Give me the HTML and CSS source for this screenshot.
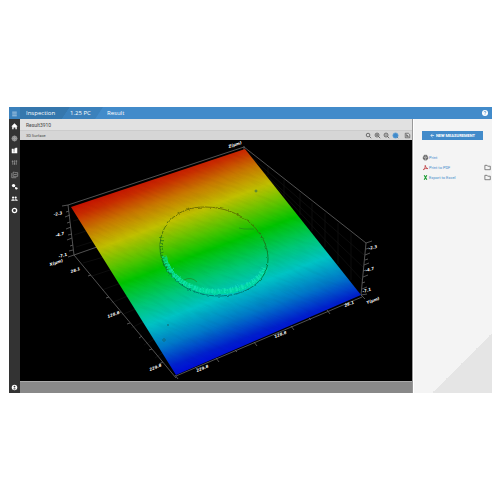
FILE: index.html
```html
<!DOCTYPE html>
<html lang="en">
	<head>
		<meta charset="UTF-8">
		<title>Inspection - Result</title>
		<link rel="stylesheet" href="styles.css">
	</head>
	<body>
		<div class="app">
			<header class="topbar">
				<button class="menu" aria-label="Menu"><svg viewBox="0 0 12 12"><path d="M3.500 4.500h5M3.500 6.500h5M3.500 8.500h5"/></svg></button>
				<nav class="crumbs">
					<a class="crumb first" href="#">Inspection</a>
					<a class="crumb second" href="#">1.25 PC</a>
					<a class="crumb" href="#">Result</a>
				</nav>
				<button class="help" aria-label="Help"><svg viewBox="0 0 12 12"><circle cx="6" cy="6" r="3" fill="#fff" stroke="none"/><path d="M5 5.300q0-1 1-1t1 .9q0 .5-1 1v.4M6 7.300v.6" stroke="#428bca" stroke-width=".7"/></svg></button>
			</header>
			<div class="body">
				<nav class="sidebar">
					<a href="#" aria-label="Home"><svg viewBox="0 0 12 12"><path class="solid" d="M6 2.500 9.500 6h-1v3H7V7H5v2H3.500V6h-1z"/></svg></a>
					<a href="#" class="dim" aria-label="Targets"><svg viewBox="0 0 12 12"><circle cx="6" cy="6" r="2.700" fill="#777"/><circle cx="6" cy="6" r="1.200"/><path d="M6 3v6M3 6h6" stroke-width=".5"/></svg></a>
					<a href="#" aria-label="Parts"><svg viewBox="0 0 12 12"><path class="solid" d="M3 4h2v1h1V3.500h1V3h2v6H3z"/><path d="M5.500 5v3" stroke="#333" stroke-width=".6"/></svg></a>
					<a href="#" class="dim" aria-label="Settings"><svg viewBox="0 0 12 12"><path d="M4 3.500v5M6 3.500v5M8 3.500v5M3 5h2M5 7.500h2M7 4.500h2" stroke-width=".6"/></svg></a>
					<a href="#" class="dim" aria-label="Library"><svg viewBox="0 0 12 12"><path d="M4.500 4.500V3.500h1.500l.5.500h3v4h-5zM3 4.500V9.500h5M5.500 6h3" stroke-width=".7"/></svg></a>
					<a href="#" aria-label="Tools"><svg viewBox="0 0 12 12"><circle class="solid" cx="5" cy="5" r="1.800"/><circle class="solid" cx="8" cy="8" r="1.300"/><path d="m5 5 3 3"/></svg></a>
					<a href="#" aria-label="Users"><svg viewBox="0 0 12 12"><path class="solid" d="M2.500 8.500V8q0-1.200 1.900-1.200T6.300 8v.5zM6.800 8.500V8q0-.7-.5-1.200 3.200-.3 3.200 1.200v.5z"/><circle class="solid" cx="4.400" cy="5" r="1.200"/><circle class="solid" cx="7.300" cy="5" r="1.200"/></svg></a>
					<a href="#" aria-label="Support"><svg viewBox="0 0 12 12"><circle cx="6" cy="6" r="2.300" stroke-width="1.500"/><path d="m3.500 3.500 1.300 1.300m2.400 2.400 1.300 1.300m0-5L7.200 4.800M4.800 7.200 3.500 8.500" stroke="#777" stroke-width=".5"/></svg></a>
					<a href="#" class="account" aria-label="Account"><svg viewBox="0 0 12 12"><circle class="solid" cx="6" cy="6" r="3"/><circle cx="6" cy="5" r="1" fill="#333" stroke="none"/><path d="M4.300 7.700q1.700-2 3.400 0-1.700 1-3.400 0" fill="#333" stroke="none"/></svg></a>
				</nav>
				<main class="result">
					<h1 class="name">Result3910</h1>
					<div class="tools">
						<h2>3D Surface</h2>
						<button aria-label="Zoom"><svg viewBox="0 0 10 10"><circle cx="4.500" cy="4.500" r="2"/><path d="m6 6 2 2"/></svg></button>
						<button aria-label="Zoom in"><svg viewBox="0 0 10 10"><circle cx="4.500" cy="4.500" r="2.200"/><path d="m6 6 2 2M3.500 4.500h2M4.500 3.500v2"/></svg></button>
						<button aria-label="Zoom out"><svg viewBox="0 0 10 10"><circle cx="4.500" cy="4.500" r="2.200"/><path d="m6 6 2 2M3.500 4.500h2"/></svg></button>
						<button aria-label="Rotate"><svg viewBox="0 0 10 10"><circle cx="5" cy="5" r="2.900" fill="#428bca" stroke="#5a9fd8"/><path d="m7 7 1 1" stroke="#357"/></svg></button>
						<button class="save" aria-label="Save view"><svg viewBox="0 0 10 10"><path d="M2.500 2.500h3.500L7.500 4v3.500h-5zM4 6V4l2 2z" stroke-width=".7"/></svg></button>
					</div>
					<svg class="plot" viewBox="20 140 392 241" role="img" aria-label="3D surface">
						<defs>
							<linearGradient id="height" gradientUnits="userSpaceOnUse" x1="72" y1="207" x2="141" y2="388">
								<stop offset="0" stop-color="#c41200"/>
								<stop offset=".05" stop-color="#c82c00"/>
								<stop offset=".14" stop-color="#c87800"/>
								<stop offset=".25" stop-color="#c0c000"/>
								<stop offset=".36" stop-color="#5ec400"/>
								<stop offset=".46" stop-color="#00c400"/>
								<stop offset=".6" stop-color="#00c878"/>
								<stop offset=".71" stop-color="#00c4c4"/>
								<stop offset=".84" stop-color="#0078c8"/>
								<stop offset=".95" stop-color="#0020cc"/>
								<stop offset="1" stop-color="#000cd8"/>
							</linearGradient>
							<linearGradient id="rim" x1="0" y1="0" x2="0" y2="1">
								<stop offset="0" stop-color="#605c00"/>
								<stop offset=".6" stop-color="#087020"/>
								<stop offset="1" stop-color="#006868"/>
							</linearGradient>
							<filter id="grain" x="0" y="0" width="1" height="1">
								<feTurbulence type="fractalNoise" baseFrequency=".06 .4" numOctaves="2"/>
								<feColorMatrix values="0 0 0 0 0  0 0 0 0 0  0 0 0 0 0  1 0 0 0 -.4"/>
							</filter>
							<filter id="rough" x="-.1" y="-.1" width="1.200" height="1.200">
								<feTurbulence type="fractalNoise" baseFrequency=".3" numOctaves="2" result="noise"/>
								<feDisplacementMap in="SourceGraphic" in2="noise" scale="3" xChannelSelector="R" yChannelSelector="G"/>
							</filter>
							<clipPath id="sheet"><path d="M72 207 245 149 361 295 176 375Z"/></clipPath>
						</defs>
						<rect x="20" y="140" width="392" height="241"/>
						<g class="grid">
							<path d="M73 221 80 219M74 235 89 230M76 247 98 240M83 263 104 257M92 276 113 269M102 290 121 283M111 303 130 295M121 315 138 308M131 328 147 320M144 345 158 337M155 358 167 350"/>
							<path d="M252 158 364 255M258 167 363 267M270 180 362 280M268 166V175M284 180V197M300 193V215M312 203V231M325 213V247M338 223V264M351 233V280"/>
						</g>
						<g class="axis">
							<path d="M68 205 244 147 366 243 361 295M68 205 74 255 97 247M74 255 176 378M176 376 362 297"/>
							<path d="M62 206l6-1M66 212l3-1M65 217l5-2M67 223l3-1M66 229l5-2M68 235l4-1M67 240l5-2M70 246l3-1M69 251l4-1M68 257l6-2"/>
							<path d="M366 243l6-2M366 249l3-1M365 255l5-2M365 260l3-1M364 265l5-2M363 271l3-1M363 277l5-2M362 283l3-1M362 289l5-2M361 295l6-1"/>
							<path d="M91 275l-3 1M109 297l-3 1M121 312l-4 2M130 323l-3 1M142 336l-3 2M152 349l-3 1M163 362l-4 2M175 375l3 4M195 367l2 2M216 358l3 4M235 350l2 2M254 342l3 4M273 334l2 2M291 326l3 4M309 318l2 2M327 310l3 4M345 303l2 2M361 295l4 4M244 146v4"/>
						</g>
						<path class="surface" d="M71 207 245 149 361 295 176 375Z" fill="url(#height)"/>
						<g clip-path="url(#sheet)"><g transform="rotate(24 215 260)"><rect x="50" y="100" width="340" height="330" filter="url(#grain)" opacity=".08"/></g></g>
						<g class="step" filter="url(#rough)">
							<path class="glow" d="M164 256C168 277 190 292 216 292 239 292 259 284 266 268"/>
							<path class="ridges" d="M166 262C174 282 194 291 216 291 239 291 258 283 264 268"/>
							<path class="flank" d="M162 237Q159 256 170 273"/>
							<path stroke="url(#rim)" d="M160 247C160 224 177 207 205 207 241 207 268 232 268 259 268 282 245 296 219 296 185 296 160 273 160 247Z"/>
						</g>
						<path class="scratch" d="M239 228l5 1h10M184 280q7-4 13 2"/>
						<g class="specks"><circle cx="256" cy="191" r="1"/><circle cx="164" cy="340" r="1.300"/><circle cx="168" cy="325" r=".6"/></g>
						<g class="labels">
							<text transform="translate(229 148) rotate(-18)">Z(µm)</text>
							<text transform="translate(54 216) rotate(-12)">-2.3</text>
							<text transform="translate(56 237) rotate(-16)">-4.7</text>
							<text transform="translate(59 258) rotate(-16)">-7.1</text>
							<text transform="translate(50 266) rotate(-18)">X(µm)</text>
							<text transform="translate(71 273) rotate(-18)">28.1</text>
							<text transform="translate(108 318) rotate(-20)">128.8</text>
							<text transform="translate(150 371) rotate(-22)">229.8</text>
							<text transform="translate(197 372) rotate(-22)">229.8</text>
							<text transform="translate(275 338) rotate(-20)">128.8</text>
							<text transform="translate(345 307) rotate(-20)">28.1</text>
							<text transform="translate(367 304) rotate(-20)">Y(µm)</text>
							<text transform="translate(369 250) rotate(-15)">-2.3</text>
							<text transform="translate(366 272) rotate(-18)">-4.7</text>
							<text transform="translate(363 293) rotate(-18)">-7.1</text>
						</g>
					</svg>
					<div class="status"></div>
				</main>
				<aside class="panel">
					<button class="new"><svg viewBox="0 0 6 6"><path d="M5 3H1M3 1 1 3l2 2"/></svg>NEW MEASUREMENT</button>
					<ul class="actions">
						<li>
							<a href="#"><svg viewBox="0 0 8 8"><path d="M2.500 3V1.500h3V3M2.500 5.500H1.500V3.200h5v2.300h-1M2.500 4.700h3v2h-3z" stroke="#333"/></svg>Print</a>
						</li>
						<li>
							<a href="#"><svg viewBox="0 0 8 8"><path d="M1.500 6.500Q4 5 3.700 1.500 4 5 6.700 5.300 4 4.500 1.500 6.500" stroke="#b8282c"/></svg>Print to PDF</a>
							<button aria-label="Choose PDF folder"><svg viewBox="0 0 8 8"><path d="M1 6.500v-5h2.500l.7 1h3v4z" stroke="#555"/></svg></button>
						</li>
						<li>
							<a href="#"><svg viewBox="0 0 8 8"><path d="m2.500 1.500 3 5m0-5-3 5" stroke="#189a30" stroke-width="1.300"/></svg>Export to Excel</a>
							<button aria-label="Choose Excel folder"><svg viewBox="0 0 8 8"><path d="M1 6.500v-5h2.500l.7 1h3v4z" stroke="#555"/></svg></button>
						</li>
					</ul>
				</aside>
			</div>
		</div>
	</body>
</html>
```

FILE: styles.css
```css
*{
	box-sizing: border-box;
	margin: 0;
	padding: 0;
}
body{
	background: #fff;
	padding: 107px 8px 0 9px;
	font-family: "Open Sans", "Noto Sans", sans-serif;
	font-size: 4px;
}
a{
	text-decoration: none;
	color: inherit;
}
button{
	border: 0;
	background: none;
	font: inherit;
	color: inherit;
}
svg{
	display: block;
	fill: none;
	stroke: currentColor;
	stroke-width: 0.8;
}
/* top bar */
.topbar{
	display: flex;
	height: 12px;
	background: #428bca;
	color: #fff;
}
.menu,.help{
	width: 12px;
	height: 12px;
}
.menu{
	width: 11px;
	background: #3b81bc;
}
.menu svg{
	stroke-width: 0.6;
}
.help{
	margin-left: auto;
	margin-right: 1px;
}
.crumbs{
	display: flex;
	font-size: 6px;
	line-height: 12px;
}
.crumb{
	padding: 0 4px;
}
.first{
	width: 50px;
	padding-left: 6px;
	background: #3577ad;
	clip-path: polygon(0 0, 100% 0, 42px 100%, 0 100%);
}
.second{
	width: 41px;
	margin-left: -8px;
	padding-left: 8px;
	background: #3b81bc;
	clip-path: polygon(8px 0, 100% 0, 33px 100%, 0 100%);
}
.body{
	display: flex;
}
/* left icons */
.sidebar{
	display: flex;
	flex-direction: column;
	width: 11px;
	padding-top: 1px;
	background: #333;
	color: #fff;
}
.sidebar a{
	height: 12px;
	padding-top: 1px;
}
.sidebar .dim{
	color: #aaa;
}
.sidebar .account{
	margin-top: auto;
}
.solid{
	fill: currentColor;
	stroke: none;
}
/* result view */
.result{
	flex: 1;
	min-width: 0;
	border-right: 1px solid #999;
}
.name{
	height: 12px;
	padding-left: 6px;
	background: #e1e1e1;
	border-bottom: 1px solid #ccc;
	color: #444;
	font-family: Roboto, sans-serif;
	font-size: 5px;
	font-weight: 400;
	line-height: 12px;
}
.tools{
	display: flex;
	height: 9px;
	padding-left: 6px;
	background: #d6d6d6;
	color: #444;
	line-height: 9px;
}
.tools h2{
	margin-right: auto;
	font-family: Roboto, sans-serif;
	font-size: 4px;
	font-weight: 400;
}
.tools button{
	width: 9px;
	height: 9px;
}
.tools .save{
	margin-left: 3px;
}
.plot{
	width: 100%;
}
.plot rect{
	fill: #000;
	stroke: none;
}
.surface{
	stroke: none;
}
.grid{
	stroke: #161616;
	stroke-width: 0.6;
}
.axis{
	stroke: #666;
	stroke-width: 0.8;
}
.step .glow{
	stroke: #00dc98;
	stroke-width: 5;
	opacity: 0.7;
}
.step .ridges{
	stroke: #20f0c8;
	stroke-width: 5;
	stroke-dasharray: 1 2 2 1;
	opacity: 0.5;
}
.step .flank{
	stroke: #187818;
	stroke-width: 3;
	stroke-dasharray: 1 2;
	opacity: 0.7;
}
.scratch{
	stroke: #208020;
	stroke-width: 0.6;
}
.specks{
	stroke: #1a5a60;
	stroke-width: 0.6;
}
.labels{
	fill: #fff;
	stroke: none;
	font-family: "DejaVu Sans", sans-serif;
	font-size: 4px;
	font-style: italic;
	font-weight: bold;
}
.status{
	height: 12px;
	background: #898989;
	border-top: 1px solid #aaa;
}
/* right panel */
.panel{
	width: 79px;
	padding: 12px 0 0 8px;
	border-left: 1px solid #fff;
	background: linear-gradient(135deg, transparent 50%, #e5e5e5 50%) right bottom / 60px 60px no-repeat #f4f4f4;
	color: #428bca;
	font-family: Roboto, sans-serif;
}
.new{
	display: flex;
	align-items: center;
	justify-content: center;
	gap: 1px;
	width: 61px;
	height: 9px;
	background: #428bca;
	color: #fff;
	font-weight: 700;
}
.new svg{
	width: 5px;
	height: 5px;
}
.actions{
	margin-top: 12px;
	list-style: none;
}
.actions li{
	display: flex;
	align-items: center;
	justify-content: space-between;
	height: 10px;
}
.actions a{
	display: flex;
	align-items: center;
}
.actions svg{
	width: 7px;
	height: 7px;
}
.actions button{
	width: 7px;
	margin-right: 1px;
}
```
